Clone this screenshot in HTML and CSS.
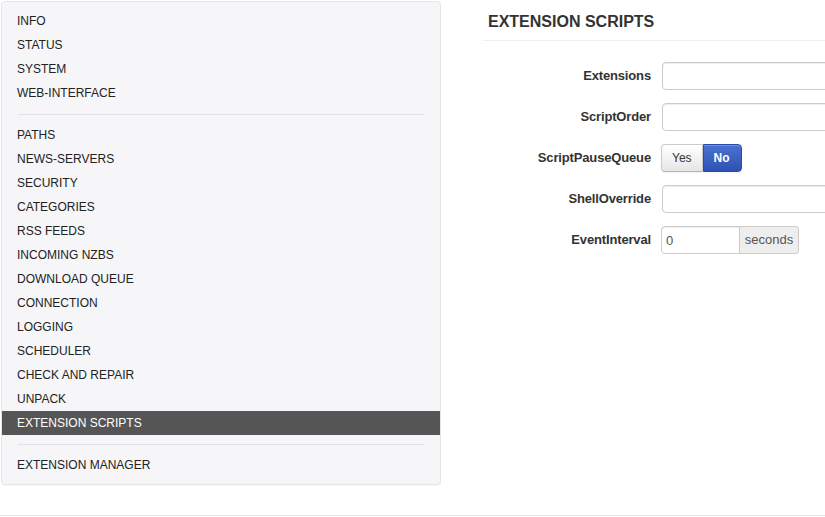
FILE: index.html
```html
<!DOCTYPE html>
<html>
<head>
<meta charset="utf-8">
<link rel="stylesheet" href="styles.css">
</head>
<body>
<div class="layout">
  <nav class="sidebar">
    <ul class="nav-list">
      <li><a>INFO</a></li>
      <li><a>STATUS</a></li>
      <li><a>SYSTEM</a></li>
      <li><a>WEB-INTERFACE</a></li>
      <li class="divider"></li>
      <li><a>PATHS</a></li>
      <li><a>NEWS-SERVERS</a></li>
      <li><a>SECURITY</a></li>
      <li><a>CATEGORIES</a></li>
      <li><a>RSS FEEDS</a></li>
      <li><a>INCOMING NZBS</a></li>
      <li><a>DOWNLOAD QUEUE</a></li>
      <li><a>CONNECTION</a></li>
      <li><a>LOGGING</a></li>
      <li><a>SCHEDULER</a></li>
      <li><a>CHECK AND REPAIR</a></li>
      <li><a>UNPACK</a></li>
      <li class="active"><a>EXTENSION SCRIPTS</a></li>
      <li class="divider"></li>
      <li><a>EXTENSION MANAGER</a></li>
    </ul>
  </nav>
  <main class="content">
    <h2 class="section-title">EXTENSION SCRIPTS</h2>
    <form class="form">
      <label class="control-label">Extensions</label>
      <div class="controls"><input class="text-input" type="text"></div>

      <label class="control-label">ScriptOrder</label>
      <div class="controls"><input class="text-input" type="text"></div>

      <label class="control-label">ScriptPauseQueue</label>
      <div class="controls">
        <div class="btn-group">
          <button type="button" class="btn">Yes</button>
          <button type="button" class="btn btn-primary">No</button>
        </div>
      </div>

      <label class="control-label">ShellOverride</label>
      <div class="controls"><input class="text-input" type="text"></div>

      <label class="control-label">EventInterval</label>
      <div class="controls">
        <div class="input-append">
          <input class="small-input" type="text" value="0">
          <span class="add-on">seconds</span>
        </div>
      </div>
    </form>
  </main>
</div>
<div class="footer-line"></div>
</body>
</html>
```

FILE: styles.css
```css
html, body {
  margin: 0;
  padding: 0;
  overflow: hidden;
  background: #fff;
  font-family: "Liberation Sans", Arial, sans-serif;
  font-size: 12px;
  color: #333;
}

.layout {
  display: flex;
  align-items: flex-start;
}

.sidebar {
  flex: none;
  margin: 1px 0 0 1px;
  width: 438px;
  background: #f6f6f8;
  border: 1px solid #e6e6e8;
  border-radius: 4px;
  box-shadow: 0 1px 1px rgba(0, 0, 0, 0.03);
  padding: 7px 0 7px;
}

.nav-list {
  list-style: none;
  margin: 0;
  padding: 0;
}

.nav-list a {
  display: block;
  padding: 3px 15px;
  line-height: 18px;
  font-size: 12px;
  color: #222;
  cursor: pointer;
}

.nav-list .active a {
  background: #555;
  color: #fff;
}

.nav-list .divider {
  height: 1px;
  margin: 9px 16px 8px;
  background: #e2e2e4;
}

.content {
  margin-left: 42px;
  flex: 1;
  min-width: 0;
  overflow: hidden;
}

.section-title {
  margin: 0;
  padding: 12px 5px 8px;
  line-height: 20px;
  font-size: 16px;
  font-weight: bold;
  color: #333;
  border-bottom: 1px solid #eeeeee;
}

.form {
  margin-top: 21px;
  display: grid;
  grid-template-columns: 168px 1fr;
  column-gap: 10px;
  row-gap: 13px;
  align-items: center;
}

.control-label {
  text-align: right;
  font-size: 13px;
  letter-spacing: -0.15px;
  font-weight: bold;
  color: #333;
  margin-top: -1px;
}

.controls {
  display: flex;
  white-space: nowrap;
}

.text-input {
  box-sizing: border-box;
  width: 320px;
  flex: none;
  height: 28px;
  margin: 0 0 0 1px;
  padding: 4px 6px;
  border: 1px solid #cccccc;
  border-radius: 4px;
  box-shadow: inset 0 1px 1px rgba(0, 0, 0, 0.075);
  font-family: inherit;
  font-size: 13px;
  background: #fff;
}

.btn-group {
  display: flex;
}

.btn {
  box-sizing: border-box;
  height: 28px;
  padding: 0 10px;
  margin: 0;
  font-family: inherit;
  font-size: 12px;
  color: #333;
  background: linear-gradient(#ffffff, #e6e6e6);
  border: 1px solid #cccccc;
  border-bottom-color: #b3b3b3;
  border-radius: 4px 0 0 4px;
  box-shadow: inset 0 1px 0 rgba(255, 255, 255, 0.2), 0 1px 2px rgba(0, 0, 0, 0.05);
}

.btn-primary {
  font-weight: bold;
  color: #fff;
  background: linear-gradient(#4a72d0, #2e52b4);
  border: 1px solid #2b4ca6;
  border-radius: 0 4px 4px 0;
  padding: 0 11px 0 10px;
}

.input-append {
  display: flex;
}

.small-input {
  box-sizing: border-box;
  width: 79px;
  height: 28px;
  margin: 0;
  padding: 4px 4px;
  border: 1px solid #cccccc;
  border-radius: 4px 0 0 4px;
  box-shadow: inset 0 1px 1px rgba(0, 0, 0, 0.075);
  font-family: inherit;
  font-size: 13px;
  color: #555;
}

.add-on {
  box-sizing: border-box;
  height: 28px;
  width: 59px;
  line-height: 26px;
  text-align: center;
  font-size: 13px;
  color: #555;
  background: #eeeeee;
  border: 1px solid #cccccc;
  border-left: 0;
  border-radius: 0 4px 4px 0;
}

.footer-line {
  margin-top: 30px;
  height: 1px;
  background: #e6e6e6;
}
```
